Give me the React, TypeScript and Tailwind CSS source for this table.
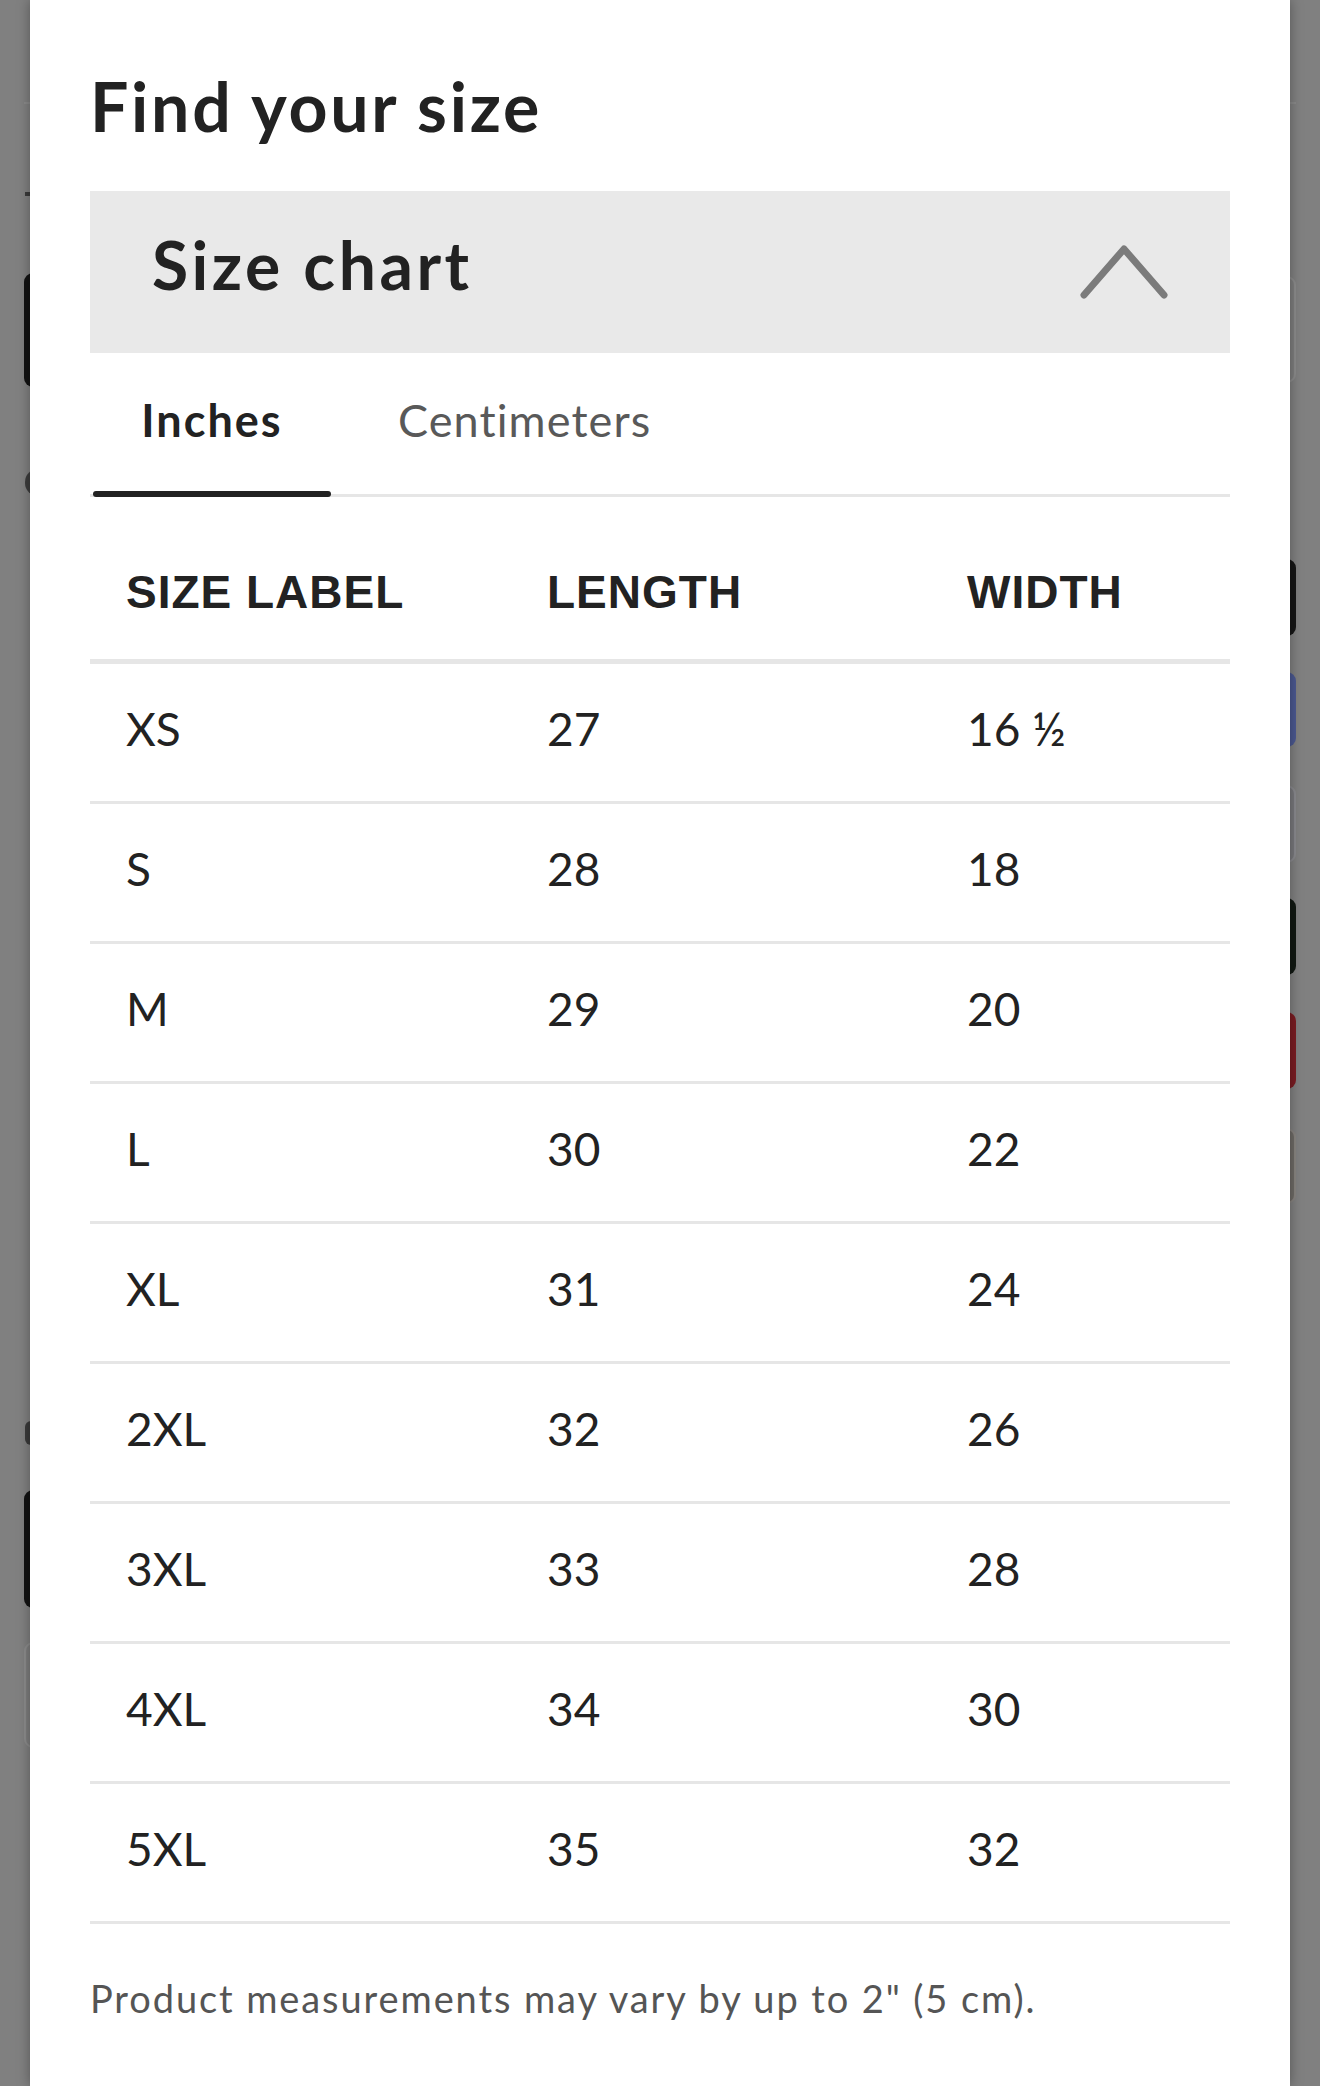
import React from "react";

const rows: [string, string, string][] = [
  ["XS", "27", "16 ½"],
  ["S", "28", "18"],
  ["M", "29", "20"],
  ["L", "30", "22"],
  ["XL", "31", "24"],
  ["2XL", "32", "26"],
  ["3XL", "33", "28"],
  ["4XL", "34", "30"],
  ["5XL", "35", "32"],
];

const proxima = { fontFamily: "Lato, 'Open Sans', sans-serif" };
const helv = { fontFamily: "'Liberation Sans', Arial, sans-serif" };

function Backdrop() {
  return (
    <div className="absolute inset-0 z-0 flex justify-between px-[24px]">
      <div className="flex w-[80px] flex-col items-start">
        <div className="mt-[102px] h-[2px] w-[30px] bg-[#8a8a8a]" />
        <div className="ml-[1px] mt-[88px] h-[4px] w-[30px] bg-[#3a3a3a]" />
        <div className="mt-[77px] h-[114px] w-[80px] rounded-[9px] bg-[#121212]" />
        <div className="ml-[1px] mt-[82px] h-[27px] w-[26px] rounded-full bg-[#3c3c3c]" />
        <div className="ml-[1px] mt-[925px] h-[24px] w-[20px] rounded-[6px] bg-[#3a3a3a]" />
        <div className="mt-[45px] h-[118px] w-[80px] rounded-[9px] bg-[#121212]" />
        <div className="mt-[34px] h-[106px] w-[80px] rounded-[9px] border-2 border-[#8c8c8c] bg-[#7e7e7e]" />
      </div>
      <div className="flex w-[80px] flex-col items-end">
        <div className="mt-[102px] h-[2px] w-[30px] bg-[#8a8a8a]" />
        <div className="mt-[172px] h-[107px] w-[80px] rounded-[9px] border-2 border-[#8c8c8c] bg-[#7e7e7e]" />
        <div className="mt-[176px] h-[77px] w-[80px] rounded-[9px] bg-[#161616]" />
        <div className="mt-[36px] h-[75px] w-[80px] rounded-[9px] bg-[#4b5890]" />
        <div className="mt-[38px] h-[78px] w-[80px] rounded-[9px] border-2 border-[#8a8a8e] bg-[#78787c]" />
        <div className="mt-[35px] h-[77px] w-[80px] rounded-[9px] bg-[#111812]" />
        <div className="mt-[37px] h-[77px] w-[80px] rounded-[9px] bg-[#7a1c22]" />
        <div className="mt-[39px] h-[76px] w-[80px] rounded-[9px] border-2 border-[#888480] bg-[#6e6a66]" />
      </div>
    </div>
  );
}

export default function App() {
  return (
    <div className="relative min-h-[2086px] overflow-hidden bg-[#808080]">
      <Backdrop />
      <div
        className="relative z-10 mx-[30px] min-h-[2086px] bg-white px-[60px] pt-[65px] text-[#222] shadow-[0_0_12px_rgba(0,0,0,0.35)]"
        style={proxima}
      >
        <h1 className="text-[68px] font-bold leading-[82px] tracking-[2.7px]">Find your size</h1>

        <div className="mt-[44px] flex h-[162px] items-center justify-between bg-[#e9e9e9] pl-[62px] pr-[61px]">
          <span className="pb-[16px] text-[66px] font-bold leading-[77px] tracking-[3.5px]">Size chart</span>
          <svg width="90" height="57" viewBox="0 0 90 57" fill="none">
            <polyline
              points="5,51 45,5 85,51"
              stroke="#7b7b7b"
              strokeWidth="7"
              strokeLinecap="round"
              strokeLinejoin="round"
            />
          </svg>
        </div>

        <div className="flex">
          <div className="relative ml-[3px] w-[238px] pb-[47px] pt-[40px] text-center text-[45px] font-bold leading-[54px] tracking-[2px]">
            Inches
            <span className="absolute bottom-[-3px] left-0 right-0 h-[6px] rounded-full bg-[#222]" />
          </div>
          <div className="ml-[17px] px-[50px] pb-[47px] pt-[40px] text-[45px] leading-[54px] tracking-[1.1px] text-[#595959]">
            Centimeters
          </div>
        </div>
        <div className="h-[3px] bg-[#e6e6e6]" />

        <div
          className="grid grid-cols-[421px_420px_1fr] border-b-[5px] border-[#e6e6e6] pb-[40px] pt-[69px] text-[46px] font-bold leading-[53px] tracking-[1px]"
          style={helv}
        >
          <div className="pl-[36px]">SIZE LABEL</div>
          <div className="pl-[36px]">LENGTH</div>
          <div className="pl-[36px]">WIDTH</div>
        </div>

        {rows.map(([s, l, w]) => (
          <div
            key={s}
            className="grid h-[140px] grid-cols-[421px_420px_1fr] border-b-[3px] border-[#e6e6e6] pt-[37px] text-[46px] leading-[55px]"
          >
            <div className="pl-[36px]">{s}</div>
            <div className="pl-[36px]">{l}</div>
            <div className="pl-[36px]">{w}</div>
          </div>
        ))}

        <p className="mt-[51px] text-[38px] leading-[47px] tracking-[1.9px] text-[#555]">
          Product measurements may vary by up to 2" (5 cm).
        </p>
      </div>
    </div>
  );
}
